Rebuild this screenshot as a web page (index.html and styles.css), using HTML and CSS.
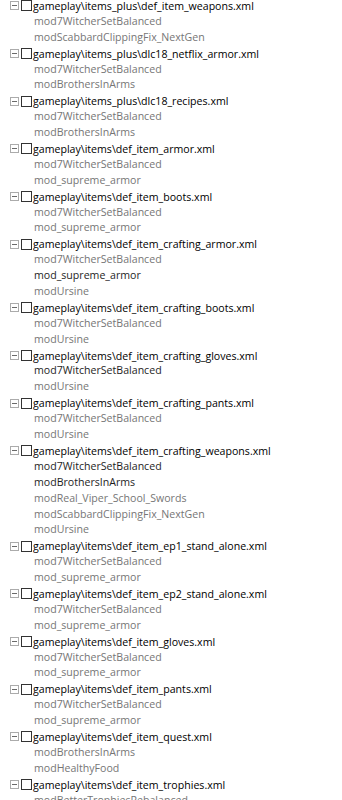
FILE: index.html
```html
<!DOCTYPE html>
<html lang="en">
  <head>
    <meta charset="utf-8" />
    <meta name="viewport" content="width=device-width, initial-scale=1.0" />
    <title>Merge tree</title>
    <link rel="stylesheet" href="styles.css">
  </head>
  <body>
    <ul class="tree">
      <li>
        <div class="node"><span class="exp"></span><span class="check"></span><span class="label">gameplay\items_plus\def_item_weapons.xml</span></div>
        <ul>
          <li>mod7WitcherSetBalanced</li>
          <li>modScabbardClippingFix_NextGen</li>
        </ul>
      </li>
      <li>
        <div class="node"><span class="exp"></span><span class="check"></span><span class="label">gameplay\items_plus\dlc18_netflix_armor.xml</span></div>
        <ul>
          <li>mod7WitcherSetBalanced</li>
          <li>modBrothersInArms</li>
        </ul>
      </li>
      <li>
        <div class="node"><span class="exp"></span><span class="check"></span><span class="label">gameplay\items_plus\dlc18_recipes.xml</span></div>
        <ul>
          <li>mod7WitcherSetBalanced</li>
          <li>modBrothersInArms</li>
        </ul>
      </li>
      <li>
        <div class="node"><span class="exp"></span><span class="check"></span><span class="label">gameplay\items\def_item_armor.xml</span></div>
        <ul>
          <li>mod7WitcherSetBalanced</li>
          <li>mod_supreme_armor</li>
        </ul>
      </li>
      <li>
        <div class="node"><span class="exp"></span><span class="check"></span><span class="label">gameplay\items\def_item_boots.xml</span></div>
        <ul>
          <li>mod7WitcherSetBalanced</li>
          <li>mod_supreme_armor</li>
        </ul>
      </li>
      <li>
        <div class="node"><span class="exp"></span><span class="check"></span><span class="label">gameplay\items\def_item_crafting_armor.xml</span></div>
        <ul>
          <li>mod7WitcherSetBalanced</li>
          <li class="active">mod_supreme_armor</li>
          <li>modUrsine</li>
        </ul>
      </li>
      <li>
        <div class="node"><span class="exp"></span><span class="check"></span><span class="label">gameplay\items\def_item_crafting_boots.xml</span></div>
        <ul>
          <li>mod7WitcherSetBalanced</li>
          <li>modUrsine</li>
        </ul>
      </li>
      <li>
        <div class="node"><span class="exp"></span><span class="check"></span><span class="label">gameplay\items\def_item_crafting_gloves.xml</span></div>
        <ul>
          <li class="active">mod7WitcherSetBalanced</li>
          <li>modUrsine</li>
        </ul>
      </li>
      <li>
        <div class="node"><span class="exp"></span><span class="check"></span><span class="label">gameplay\items\def_item_crafting_pants.xml</span></div>
        <ul>
          <li>mod7WitcherSetBalanced</li>
          <li>modUrsine</li>
        </ul>
      </li>
      <li>
        <div class="node"><span class="exp"></span><span class="check"></span><span class="label">gameplay\items\def_item_crafting_weapons.xml</span></div>
        <ul>
          <li class="active">mod7WitcherSetBalanced</li>
          <li class="active">modBrothersInArms</li>
          <li>modReal_Viper_School_Swords</li>
          <li>modScabbardClippingFix_NextGen</li>
          <li>modUrsine</li>
        </ul>
      </li>
      <li>
        <div class="node"><span class="exp"></span><span class="check"></span><span class="label">gameplay\items\def_item_ep1_stand_alone.xml</span></div>
        <ul>
          <li>mod7WitcherSetBalanced</li>
          <li>mod_supreme_armor</li>
        </ul>
      </li>
      <li>
        <div class="node"><span class="exp"></span><span class="check"></span><span class="label">gameplay\items\def_item_ep2_stand_alone.xml</span></div>
        <ul>
          <li>mod7WitcherSetBalanced</li>
          <li>mod_supreme_armor</li>
        </ul>
      </li>
      <li>
        <div class="node"><span class="exp"></span><span class="check"></span><span class="label">gameplay\items\def_item_gloves.xml</span></div>
        <ul>
          <li>mod7WitcherSetBalanced</li>
          <li>mod_supreme_armor</li>
        </ul>
      </li>
      <li>
        <div class="node"><span class="exp"></span><span class="check"></span><span class="label">gameplay\items\def_item_pants.xml</span></div>
        <ul>
          <li>mod7WitcherSetBalanced</li>
          <li>mod_supreme_armor</li>
        </ul>
      </li>
      <li>
        <div class="node"><span class="exp"></span><span class="check"></span><span class="label">gameplay\items\def_item_quest.xml</span></div>
        <ul>
          <li>modBrothersInArms</li>
          <li>modHealthyFood</li>
        </ul>
      </li>
      <li>
        <div class="node"><span class="exp"></span><span class="check"></span><span class="label">gameplay\items\def_item_trophies.xml</span></div>
        <ul>
          <li>modBetterTrophiesRebalanced</li>
        </ul>
      </li>
    </ul>
  </body>
</html>
```

FILE: styles.css
```css
html,
body {
  margin: 0;
  background: #fff;
  overflow: hidden;
}
body {
  font-family: "Open Sans", "Noto Sans", sans-serif;
  font-size: 10.6px;
  color: #000;
}
.tree,
.tree ul {
  list-style: none;
  margin: 0;
  padding: 0;
}
.tree {
  margin-top: -2px;
}
.node {
  display: flex;
  align-items: center;
  height: 15.9px;
  padding-left: 10px;
}
/* expander: small grey box with a minus */
.exp {
  position: relative;
  box-sizing: border-box;
  width: 9px;
  height: 9px;
  border: 1px solid #ababab;
  margin-right: 2px;
}
.exp::after {
  content: "";
  position: absolute;
  left: 1px;
  right: 1px;
  top: 3px;
  height: 1px;
  background: #6a6a6a;
}
.check {
  box-sizing: border-box;
  width: 11px;
  height: 11px;
  border: 1px solid #333;
  background: #fff;
  margin-right: 1px;
}
.label {
  white-space: nowrap;
}
.tree ul li {
  height: 15.9px;
  line-height: 15.9px;
  padding-left: 34px;
  color: #767676;
  white-space: nowrap;
}
.tree ul li.active {
  color: #1e1e1e;
}
```
